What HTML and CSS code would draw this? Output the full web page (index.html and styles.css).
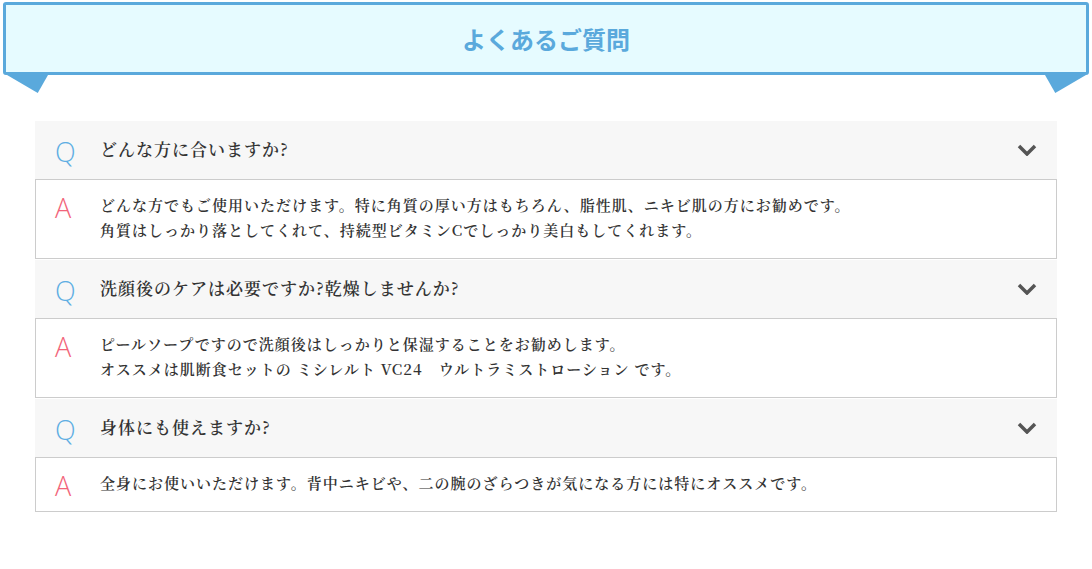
FILE: index.html
```html
<!DOCTYPE html>
<html lang="ja">
<head>
<meta charset="utf-8">
<title>よくあるご質問</title>
<link rel="stylesheet" href="styles.css">
</head>
<body>
<header class="faq-head">
  <h2 class="faq-title">よくあるご質問</h2>
</header>

<main class="faq-list">
  <section class="faq-item">
    <div class="faq-q">
      <span class="mark mark-q">Q</span>
      <p class="q-text">どんな方に合いますか?</p>
      <svg class="chevron" viewBox="0 0 20 12" width="20" height="12"><polyline points="2,2 10,10 18,2"/></svg>
    </div>
    <div class="faq-a">
      <span class="mark mark-a">A</span>
      <p class="a-text">どんな方でもご使用いただけます。特に角質の厚い方はもちろん、脂性肌、ニキビ肌の方にお勧めです。<br>角質はしっかり落としてくれて、持続型ビタミンCでしっかり美白もしてくれます。</p>
    </div>
  </section>

  <section class="faq-item">
    <div class="faq-q">
      <span class="mark mark-q">Q</span>
      <p class="q-text">洗顔後のケアは必要ですか?乾燥しませんか?</p>
      <svg class="chevron" viewBox="0 0 20 12" width="20" height="12"><polyline points="2,2 10,10 18,2"/></svg>
    </div>
    <div class="faq-a">
      <span class="mark mark-a">A</span>
      <p class="a-text">ピールソープですので洗顔後はしっかりと保湿することをお勧めします。<br>オススメは肌断食セットの ミシレルト VC24　ウルトラミストローション です。</p>
    </div>
  </section>

  <section class="faq-item">
    <div class="faq-q">
      <span class="mark mark-q">Q</span>
      <p class="q-text">身体にも使えますか?</p>
      <svg class="chevron" viewBox="0 0 20 12" width="20" height="12"><polyline points="2,2 10,10 18,2"/></svg>
    </div>
    <div class="faq-a">
      <span class="mark mark-a">A</span>
      <p class="a-text">全身にお使いいただけます。背中ニキビや、二の腕のざらつきが気になる方には特にオススメです。</p>
    </div>
  </section>
</main>
</body>
</html>
```
FILE: styles.css
```css
* {
  box-sizing: border-box;
}

body {
  margin: 0;
  background: #fff;
  font-family: "Noto Serif CJK JP", "Noto Sans CJK JP", serif;
  color: #333;
}

/* Ribbon heading */
.faq-head {
  padding: 2px 3px 0;
}

.faq-title {
  position: relative;
  margin: 0;
  height: 73px;
  border: 3px solid #5aa9dc;
  border-radius: 3px;
  background: #e6fbff;
  color: #5aa9dc;
  font-family: "Noto Sans CJK JP", sans-serif;
  font-size: 24px;
  font-weight: 700;
  display: flex;
  align-items: center;
  justify-content: center;
}

/* folded ribbon ends under the box */
.faq-title::before,
.faq-title::after {
  content: "";
  position: absolute;
  top: 70px;
  width: 41px;
  height: 18px;
  background: #5aa9dc;
}

.faq-title::before {
  left: 1px;
  clip-path: polygon(0 0, 100% 0, 75% 100%);
}

.faq-title::after {
  right: 0;
  clip-path: polygon(0 0, 100% 0, 25% 100%);
}

/* Question / answer list */
.faq-list {
  margin: 46px 35px 0;
  display: flex;
  flex-direction: column;
  gap: 1px;
}

.faq-q {
  height: 58px;
  background: #f7f7f7;
  display: flex;
  align-items: center;
  padding: 0 20px 3px 20px;
}

.mark {
  width: 45px;
  flex: none;
  font-family: "Open Sans", "Liberation Sans", sans-serif;
  font-weight: 300;
  font-size: 27px;
}

.mark-q {
  color: #5eaee3;
  line-height: 1;
  padding-top: 5px;
}

.mark-a {
  color: #f2647a;
  height: 25px;
  line-height: 25px;
  padding-top: 3px;
}

.q-text {
  margin: 0;
  flex: 1;
  font-size: 17px;
  font-weight: 600;
  letter-spacing: 1px;
  color: #333;
}

.chevron {
  flex: none;
  margin-top: 3px;
  fill: none;
  stroke: #555;
  stroke-width: 3.5;
  stroke-linecap: butt;
}

.faq-a {
  border: 1px solid #ccc;
  background: #fff;
  display: flex;
  align-items: flex-start;
  padding: 12px 20px 16px 19px;
}

.a-text {
  margin: 0;
  font-size: 15px;
  line-height: 25px;
  font-weight: 600;
  letter-spacing: 1px;
  color: #333;
}
```
